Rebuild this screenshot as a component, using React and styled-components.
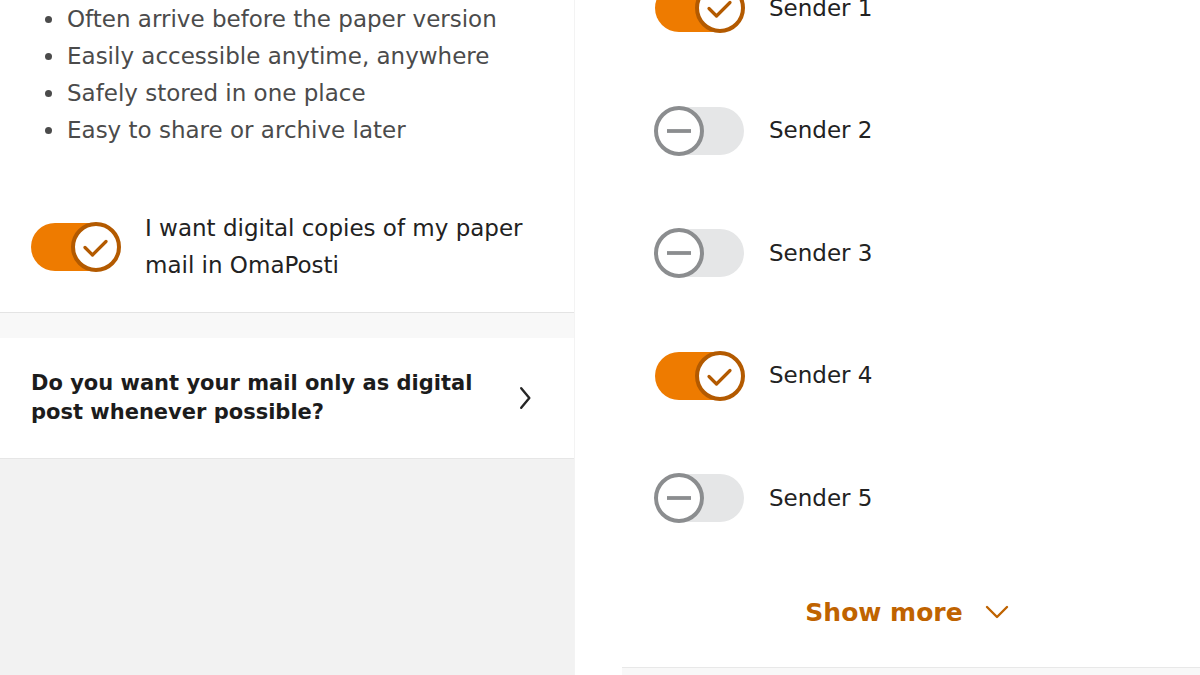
import React from 'react';
import styled, { createGlobalStyle } from 'styled-components';

const GlobalStyle = createGlobalStyle`
  html, body {
    margin: 0;
    padding: 0;
    background: #ffffff;
    font-family: "DejaVu Sans", "Noto Sans", sans-serif;
  }
`;

const Page = styled.div`
  display: flex;
  width: 1200px;
  height: 675px;
  overflow: hidden;
  background: #ffffff;
`;

const LeftColumn = styled.div`
  width: 575px;
  display: flex;
  flex-direction: column;
  background: #f2f2f2;
  border-right: 1px solid #f3f3f3;
  box-sizing: border-box;
`;

const InfoSection = styled.div`
  background: #ffffff;
  padding: 0 0 28px 0;
  border-bottom: 1px solid #e4e4e4;
`;

const BulletList = styled.ul`
  list-style: none;
  margin: 0;
  padding: 1px 0 0 45px;
`;

const Bullet = styled.li`
  display: flex;
  align-items: center;
  gap: 15px;
  font-size: 23px;
  line-height: 37px;
  color: #4b4b4b;

  &::before {
    content: "";
    width: 7px;
    height: 7px;
    border-radius: 50%;
    background: #4b4b4b;
    flex-shrink: 0;
  }
`;

const ToggleRow = styled.div`
  display: flex;
  align-items: center;
  gap: 25px;
  padding: ${props => props.$pad || '0'};
  height: ${props => props.$height || 'auto'};
  box-sizing: border-box;
`;

const ToggleLabel = styled.div`
  font-size: 23px;
  line-height: 37px;
  color: #222222;
  max-width: ${props => props.$maxWidth || 'none'};
`;

const Strip = styled.div`
  height: 25px;
  background: #f8f8f8;
`;

const LinkCard = styled.div`
  height: 121px;
  box-sizing: border-box;
  background: #ffffff;
  border-bottom: 1px solid #e6e6e6;
  display: flex;
  align-items: center;
  justify-content: space-between;
  padding: 0 36px 0 31px;
`;

const LinkTitle = styled.div`
  font-size: 21px;
  line-height: 29px;
  font-weight: 700;
  color: #1c1c1c;
  max-width: 460px;
`;

const Filler = styled.div`
  flex: 1;
  background: ${props => props.$bg};
`;

const RightColumn = styled.div`
  margin-left: 47px;
  width: 578px;
  display: flex;
  flex-direction: column;
`;

const SenderPanel = styled.div`
  background: #ffffff;
  border-bottom: 1px solid #e8e8e8;
  display: flex;
  flex-direction: column;
`;

const SenderList = styled.div`
  margin-top: -53px;
  display: flex;
  flex-direction: column;
`;

const ShowMore = styled.button`
  height: 107px;
  border: none;
  background: transparent;
  display: flex;
  align-items: center;
  justify-content: center;
  gap: 22px;
  padding: 0 8px 2px 0;
  font-family: inherit;
  font-size: 25px;
  font-weight: 700;
  color: #bf6300;
  cursor: pointer;
`;

const Track = styled.div`
  width: 89px;
  height: 48px;
  border-radius: 24px;
  background: ${props => (props.$on ? '#ee7b00' : '#e5e6e7')};
  display: flex;
  align-items: center;
  justify-content: ${props => (props.$on ? 'flex-end' : 'flex-start')};
  flex-shrink: 0;
`;

const Knob = styled.div`
  width: 50px;
  height: 50px;
  margin: 0 -1px;
  box-sizing: border-box;
  border-radius: 50%;
  background: #ffffff;
  border: 4px solid ${props => (props.$on ? '#b35a00' : '#8b8d8f')};
  display: flex;
  align-items: center;
  justify-content: center;
  color: ${props => (props.$on ? '#b35a00' : '#8b8d8f')};
`;

function Toggle({ on }) {
  return (
    <Track $on={on}>
      <Knob $on={on}>
        {on ? (
          <svg width="32" height="32" viewBox="0 0 32 32" fill="none" stroke="currentColor" strokeWidth="3.2" strokeLinecap="round" strokeLinejoin="round">
            <polyline points="5 16.5 12.5 24 26 10.5" />
          </svg>
        ) : (
          <svg width="32" height="32" viewBox="0 0 32 32" fill="none" stroke="currentColor" strokeWidth="3.8">
            <line x1="4" y1="16" x2="28" y2="16" />
          </svg>
        )}
      </Knob>
    </Track>
  );
}

const benefits = [
  'Often arrive before the paper version',
  'Easily accessible anytime, anywhere',
  'Safely stored in one place',
  'Easy to share or archive later',
];

const senders = [
  { name: 'Sender 1', on: true },
  { name: 'Sender 2', on: false },
  { name: 'Sender 3', on: false },
  { name: 'Sender 4', on: true },
  { name: 'Sender 5', on: false },
];

export default function App() {
  return (
    <>
      <GlobalStyle />
      <Page>
        <LeftColumn>
          <InfoSection>
            <BulletList>
              {benefits.map(b => (
                <Bullet key={b}>{b}</Bullet>
              ))}
            </BulletList>
            <ToggleRow $pad="61px 0 0 31px">
              <Toggle on />
              <ToggleLabel $maxWidth="395px">
                I want digital copies of my paper mail in OmaPosti
              </ToggleLabel>
            </ToggleRow>
          </InfoSection>
          <Strip />
          <LinkCard>
            <LinkTitle>Do you want your mail only as digital post whenever possible?</LinkTitle>
            <svg width="26" height="26" viewBox="0 0 24 24" fill="none" stroke="#262626" strokeWidth="2.2" strokeLinecap="round" strokeLinejoin="round">
              <polyline points="8.5 3 16 12 8.5 21" />
            </svg>
          </LinkCard>
          <Filler $bg="#f2f2f2" />
        </LeftColumn>
        <RightColumn>
          <SenderPanel>
            <SenderList>
              {senders.map(s => (
                <ToggleRow key={s.name} $pad="0 0 0 33px" $height="122.5px">
                  <Toggle on={s.on} />
                  <ToggleLabel>{s.name}</ToggleLabel>
                </ToggleRow>
              ))}
            </SenderList>
            <ShowMore>
              Show more
              <svg width="24" height="16" viewBox="0 0 24 16" fill="none" stroke="#bf6300" strokeWidth="2.4" strokeLinecap="round" strokeLinejoin="round">
                <polyline points="2 3 12 13 22 3" />
              </svg>
            </ShowMore>
          </SenderPanel>
          <Filler $bg="#f8f8f8" />
        </RightColumn>
      </Page>
    </>
  );
}
